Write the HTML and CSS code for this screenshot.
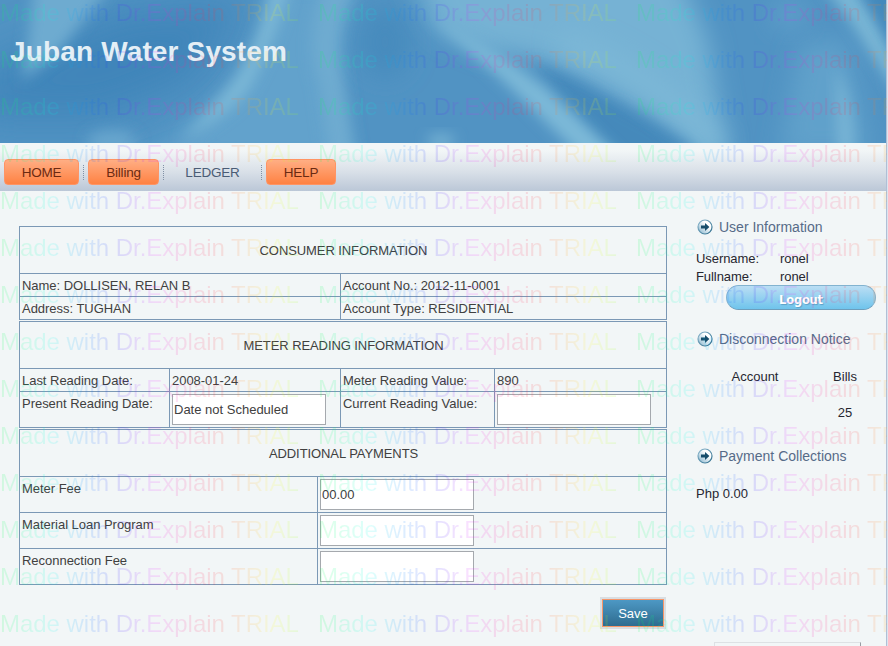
FILE: index.html
```html
<!DOCTYPE html>
<html lang="en">
<head>
<meta charset="utf-8">
<title>Juban Water System</title>
<link rel="stylesheet" href="styles.css">
</head>
<body>
<div class="page">
  <header class="banner">
    <svg class="art" viewBox="0 0 886 143" preserveAspectRatio="none" aria-hidden="true">
      <defs>
        <filter id="s" x="-50%" y="-50%" width="200%" height="200%"><feGaussianBlur stdDeviation="7"/></filter>
        <filter id="m" x="-50%" y="-50%" width="200%" height="200%"><feGaussianBlur stdDeviation="12"/></filter>
        <filter id="l" x="-60%" y="-60%" width="220%" height="220%"><feGaussianBlur stdDeviation="20"/></filter>
      </defs>
      <rect width="886" height="143" fill="#5193c3"/>
      <path d="M-20 70L120 10L250 0L190 85L100 120L-20 120Z" fill="#4085ba" filter="url(#l)"/>
      <path d="M35-20H115L60 50L22 80Q30 30 35-20Z" fill="#6eabd0" filter="url(#s)"/>
      <ellipse cx="112" cy="142" rx="25" ry="12" fill="#68a6ce" filter="url(#s)"/>
      <path d="M275-20H350L330 60L345 165H140L230 95L260 45Z" fill="#62a2cc" filter="url(#m)"/>
      <path d="M272-20Q262 40 234 80Q205 115 180 140Q225 120 248 92Q275 45 292-20Z" fill="#7cb8d7" filter="url(#s)"/>
      <path d="M325-20Q302 45 318 85L328 160H356Q342 80 340 50Q340 15 360-20Z" fill="#6eabd0" filter="url(#s)"/>
      <ellipse cx="385" cy="42" rx="26" ry="35" fill="#468bbd" filter="url(#m)"/>
      <path d="M405-30H678L708 40L728 160H705Q650 110 590 82Q530 52 490 52L440 32Z" fill="#76b2d4" filter="url(#m)"/>
      <path d="M530 62Q565 72 600 94L690 142L705 160H612Z" fill="#4489bb" filter="url(#s)"/>
      <path d="M425 12Q490 45 545 87L623 160H585L515 92Q470 50 425 12Z" fill="#7db9d8" filter="url(#s)"/>
      <path d="M560 40Q660 75 718 150" fill="none" stroke="#7db8d7" stroke-width="22" filter="url(#m)"/>
      <ellipse cx="441" cy="141" rx="14" ry="7" fill="#76b2d3" filter="url(#s)"/>
      <path d="M800 45L845 40L870 155H780Z" fill="#60a1cb" filter="url(#m)"/>
      <path d="M836 65Q855 105 854 155H838Z" fill="#79b5d6" filter="url(#s)"/>
      <ellipse cx="790" cy="15" rx="18" ry="15" fill="#5f9fca" filter="url(#m)"/>
      <path d="M822-15Q850 18 866 46L898 95V68Q880 25 852-15Z" fill="#7ab7d6" filter="url(#s)"/>
      <path d="M860-15H900V55Q880 20 860-15Z" fill="#4288bb" filter="url(#s)"/>
    </svg>
    <h1 class="brand">Juban Water System</h1>
  </header>
  <nav class="nav">
    <a class="tab tab-home hot">HOME</a><i class="dots"></i>
    <a class="tab tab-billing hot">Billing</a><i class="dots"></i>
    <a class="tab tab-ledger">LEDGER</a><i class="dots"></i>
    <a class="tab tab-help hot">HELP</a>
  </nav>
  <div class="content">
    <main class="main">
      <section class="sheet consumer">
        <h2 class="cell head">CONSUMER INFORMATION</h2>
        <div class="cell">Name: DOLLISEN, RELAN B</div><div class="cell">Account No.: 2012-11-0001</div>
        <div class="cell">Address: TUGHAN</div><div class="cell">Account Type: RESIDENTIAL</div>
      </section>
      <section class="sheet meter">
        <h2 class="cell head">METER READING INFORMATION</h2>
        <div class="cell">Last Reading Date:</div><div class="cell">2008-01-24</div>
        <div class="cell">Meter Reading Value:</div><div class="cell">890</div>
        <div class="cell">Present Reading Date:</div><div class="cell entry"><input class="field" value="Date not Scheduled"></div>
        <div class="cell">Current Reading Value:</div><div class="cell entry"><input class="field"></div>
      </section>
      <section class="sheet payments">
        <h2 class="cell head">ADDITIONAL PAYMENTS</h2>
        <div class="cell">Meter Fee</div><div class="cell entry"><input class="field" value="00.00"></div>
        <div class="cell">Material Loan Program</div><div class="cell entry"><input class="field"></div>
        <div class="cell">Reconnection Fee</div><div class="cell entry"><input class="field"></div>
      </section>
      <button class="save">Save</button>
    </main>
    <aside class="side">
      <svg width="0" height="0" class="sprites">
        <defs>
          <linearGradient id="rim" x1="0" y1="0" x2="1" y2="1"><stop offset="0" stop-color="#8fb9cf"/><stop offset="1" stop-color="#2c6c8c"/></linearGradient>
          <linearGradient id="disc" x1="0" y1="1" x2="1" y2="0"><stop offset="0" stop-color="#7fb0ca"/><stop offset=".65" stop-color="#fff"/></linearGradient>
        </defs>
        <symbol id="go" viewBox="0 0 16 16">
          <circle cx="8" cy="8" r="7" fill="url(#disc)" stroke="url(#rim)" stroke-width="1.2"/>
          <path d="M4 6.5H8V3.9L12.4 8L8 12.1V9.5H4Z" fill="#174d6b"/>
        </symbol>
      </svg>
      <h3 class="title"><svg class="go"><use href="#go"/></svg>User Information</h3>
      <dl class="user">
        <dt>Username:</dt><dd>ronel</dd>
        <dt>Fullname:</dt><dd>ronel</dd>
      </dl>
      <button class="logout">Logout</button>
      <h3 class="title title-notice"><svg class="go"><use href="#go"/></svg>Disconnection Notice</h3>
      <div class="notice">
        <span>Account</span><span>Bills</span>
        <span></span><span>25</span>
      </div>
      <h3 class="title title-pay"><svg class="go"><use href="#go"/></svg>Payment Collections</h3>
      <p class="total">Php 0.00</p>
      <div class="panel"></div>
    </aside>
  </div>
  <div class="watermark" id="watermark" aria-hidden="true"></div>
</div>
<script src="script.js"></script>
</body>
</html>
```
FILE: styles.css
```css
* { box-sizing: border-box; }
body {
  margin: 0;
  overflow: hidden;
  font: 13px/18px "Liberation Sans", Arial, sans-serif;
  color: #404040;
}
h1, h2, h3, p, dl, dd { margin: 0; font-weight: normal; }
button, input { font: inherit; margin: 0; }

.page {
  position: relative;
  width: 888px;
  height: 646px;
  overflow: hidden;
  background: #f2f6f7;
  border-right: 1px solid #dde4ee;
}
.page::after {
  content: "";
  position: absolute;
  top: 0;
  bottom: 0;
  right: 0;
  width: 1px;
  background: #b0bfd6;
}

.banner { position: relative; width: 886px; height: 143px; padding: 36px 0 0 10px; }
.art { position: absolute; inset: 0; width: 886px; height: 143px; }
.brand {
  position: relative;
  font-size: 28px;
  line-height: 32px;
  font-weight: bold;
  letter-spacing: .15px;
  color: #e4eff6;
}

.nav {
  display: flex;
  width: 886px;
  height: 48px;
  padding: 16px 0 0 4px;
  background: linear-gradient(#f2f6f7 15%, #d9e0e8 60%, #bbc7d7);
}
.tab {
  height: 26px;
  line-height: 27px;
  font-size: 13.5px;
  letter-spacing: -.2px;
  text-align: center;
  color: #4a5c75;
}
.hot {
  color: #6b2a12;
  line-height: 25px;
  border: 1px solid #ff9464;
  border-radius: 4px;
  background: linear-gradient(#ffae84, #ff8243);
}
.tab-home { width: 75px; }
.tab-billing { width: 71px; }
.tab-ledger { width: 97px; }
.tab-help { width: 70px; }
.dots {
  width: 1px;
  height: 15px;
  margin: 6px 4px 0;
  background: repeating-linear-gradient(#8291a5 0 1px, transparent 1px 2px);
}
.tab-billing + .dots { margin-right: 0; }
.tab-ledger + .dots { margin-left: 0; }

.content { display: flex; }
.main {
  display: flex;
  flex-direction: column;
  width: 648px;
  margin: 35px 0 0 19px;
}
.sheet {
  display: grid;
  gap: 1px;
  padding: 1px;
  margin-bottom: 1px;
  background: #7b98b5;
}
.consumer { grid-template: 46px 22px 22px / 320px 325px; }
.meter { grid-template: 46px 22px 35px / 149px 170px 153px 171px; }
.payments { grid-template: 46px 35px 35px 35px / 297px 348px; }
.cell { padding: 3px 2px 0; background: #f2f6f7; letter-spacing: -.03px; }
.entry { padding-top: 2px; }
.head {
  grid-column: 1 / -1;
  padding: 15px 0 0 1px;
  font-size: 13px;
  letter-spacing: -.08px;
  text-align: center;
}
.field {
  display: block;
  width: 154px;
  height: 31px;
  padding: 0 1px;
  border: 1px solid #a5a9ae;
  border-radius: 0;
  background: #fff;
  color: #404040;
}
.save {
  align-self: flex-end;
  width: 62px;
  height: 28px;
  margin: 13px 3px 0 0;
  padding: 2px 0 0;
  border: 1px solid #f79568;
  box-shadow: 0 0 0 2px #d9dee2;
  background: linear-gradient(#4d98c4, #2e6c8f);
  color: #fff;
}

.side { width: 190px; margin-left: 29px; padding-top: 27px; color: #262630; }
.sprites { position: absolute; }
.title {
  display: flex;
  align-items: center;
  height: 18px;
  padding-left: 1px;
  font-size: 14px;
  color: #566b88;
}
.go { width: 16px; height: 16px; margin: -1px 6px 0 0; }
.user { display: grid; grid-template-columns: 84px 1fr; margin-top: 14px; letter-spacing: -.07px; }
.logout {
  display: block;
  width: 150px;
  height: 25px;
  margin: -1px 0 0 30px;
  padding: 4px 0 0;
  border: 1px solid #82b3d0;
  border-bottom-color: #6d9ebc;
  border-radius: 13px;
  background: linear-gradient(#bbdef4, #6fc4ec);
  font: bold 11.5px/16px "DejaVu Sans", Verdana, sans-serif;
  letter-spacing: -.2px;
  text-shadow: 1px 1px 1px #5d9fc6;
  color: #fff;
}
.title-notice { margin-top: 20px; }
.notice {
  display: grid;
  grid-template-columns: 48px 30px;
  grid-template-rows: 36px 36px;
  column-gap: 51px;
  margin: 20px 0 0 35px;
}
.notice span { text-align: center; white-space: nowrap; }
.title-pay { margin-top: 7px; }
.total { margin-top: 20px; }
.panel {
  width: 147px;
  height: 20px;
  margin: 139px 0 0 18px;
  border: 1px solid #dde1e4;
  border-right-color: #999da4;
}

/* Tiled rainbow stamp laid over the whole window */
.watermark {
  position: absolute;
  inset: -1px -70px 0 0;
  z-index: 2;
  display: grid;
  grid-template-columns: repeat(3, 318px);
  grid-auto-rows: 47px;
  pointer-events: none;
  opacity: .13;
}
.stamp {
  width: 300px;
  height: 30px;
  white-space: nowrap;
  font-size: 24px;
  line-height: 27px;
  letter-spacing: -.03px;
  color: transparent;
  background: linear-gradient(90deg, #00ff48, #00ffe8 17%, #0090ff 27%, #2020ff 38%, #7a20ff 44%, #ef20ff 52%, #ff2070 64%, #ff3030 73%, #ff9a20 82%, #ffff20 91%, #90ff20);
  -webkit-background-clip: text;
  background-clip: text;
}
```
FILE: script.js
```js
// Fill the overlay: 14 rows of 3 stamps
const layer = document.getElementById('watermark');
for (let i = 0; i < 42; i++) {
  const stamp = document.createElement('span');
  stamp.className = 'stamp';
  stamp.textContent = 'Made with Dr.Explain TRIAL';
  layer.append(stamp);
}
```
